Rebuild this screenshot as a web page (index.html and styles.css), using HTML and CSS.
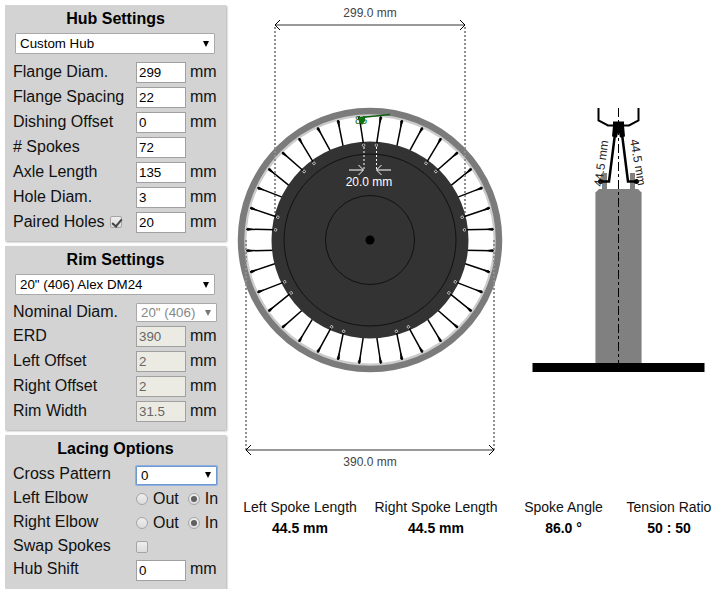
FILE: index.html
```html
<!DOCTYPE html>
<html lang="en">
<head>
<meta charset="utf-8">
<title>Spoke Calculator</title>
<link rel="stylesheet" href="styles.css">
</head>
<body>
<form class="sidebar">
  <section class="panel">
    <h2>Hub Settings</h2>
    <span class="select select-wide"><select aria-label="Hub"><option>Custom Hub</option></select></span>
    <div class="row"><label for="fd">Flange Diam.</label><input class="num" id="fd" value="299"><span class="unit">mm</span></div>
    <div class="row"><label for="fs">Flange Spacing</label><input class="num" id="fs" value="22"><span class="unit">mm</span></div>
    <div class="row"><label for="do">Dishing Offset</label><input class="num" id="do" value="0"><span class="unit">mm</span></div>
    <div class="row"><label for="ns"># Spokes</label><input class="num" id="ns" value="72"></div>
    <div class="row"><label for="al">Axle Length</label><input class="num" id="al" value="135"><span class="unit">mm</span></div>
    <div class="row"><label for="hd">Hole Diam.</label><input class="num" id="hd" value="3"><span class="unit">mm</span></div>
    <div class="row"><span class="paired"><label for="ph">Paired Holes</label><input type="checkbox" class="tick" id="ph" checked></span><input class="num" aria-label="Paired hole spacing" value="20"><span class="unit">mm</span></div>
  </section>

  <section class="panel">
    <h2>Rim Settings</h2>
    <span class="select select-wide"><select aria-label="Rim"><option>20" (406) Alex DM24</option></select></span>
    <div class="row row-select"><label for="nd">Nominal Diam.</label><span class="select"><select id="nd" disabled><option>20" (406)</option></select></span></div>
    <div class="row"><label for="erd">ERD</label><input class="num" id="erd" value="390" disabled><span class="unit">mm</span></div>
    <div class="row"><label for="lo">Left Offset</label><input class="num" id="lo" value="2" disabled><span class="unit">mm</span></div>
    <div class="row"><label for="ro">Right Offset</label><input class="num" id="ro" value="2" disabled><span class="unit">mm</span></div>
    <div class="row"><label for="rw">Rim Width</label><input class="num" id="rw" value="31.5" disabled><span class="unit">mm</span></div>
  </section>

  <section class="panel lacing">
    <h2>Lacing Options</h2>
    <div class="row row-select"><label for="cp">Cross Pattern</label><span class="select select-active"><select id="cp"><option>0</option></select></span></div>
    <div class="row" role="group" aria-label="Left Elbow"><span class="name">Left Elbow</span><span class="choices"><label><input type="radio" name="left"> Out</label><label><input type="radio" name="left" checked> In</label></span></div>
    <div class="row" role="group" aria-label="Right Elbow"><span class="name">Right Elbow</span><span class="choices"><label><input type="radio" name="right"> Out</label><label><input type="radio" name="right" checked> In</label></span></div>
    <div class="row"><label for="ss">Swap Spokes</label><input type="checkbox" class="tick" id="ss"></div>
    <div class="row"><label for="hs">Hub Shift</label><input class="num" id="hs" value="0"><span class="unit">mm</span></div>
  </section>
</form>

<main class="view">
  <svg class="drawing" viewBox="232 5 487 490" role="img" aria-label="Wheel drawing">
    <defs>
      <g id="pair">
        <path class="spoke" d="M-6.4-94.8L-10.8-123.5M6.4-94.8L10.8-123.5"/>
        <path class="nipple" d="M-9.8-117L-9.6-122.5L-10.8-123.5L-12-122.2zM9.800-117L9.600-122.500L10.800-123.500L12-122.200z"/>
      </g>
      <g id="front">
        <use href="#pair"/>
        <circle class="hole" cx="-6.4" cy="-94.8" r="1.3"/>
        <circle class="hole" cx="6.4" cy="-94.8" r="1.3"/>
      </g>
    </defs>

    <!-- Front view of the wheel -->
    <g transform="translate(370 240)">
      <circle class="rim-inner" r="125"/>
      <circle class="rim" r="129"/>
      <use href="#pair" transform="rotate(20)"/>
      <use href="#pair" transform="rotate(60)"/>
      <use href="#pair" transform="rotate(100)"/>
      <use href="#pair" transform="rotate(140)"/>
      <use href="#pair" transform="rotate(180)"/>
      <use href="#pair" transform="rotate(220)"/>
      <use href="#pair" transform="rotate(260)"/>
      <use href="#pair" transform="rotate(300)"/>
      <use href="#pair" transform="rotate(340)"/>
      <path class="dotted" d="M-95-213V0M95-213V0"/>
      <circle class="hub" r="98.500"/>
      <circle class="hub-line" r="86"/>
      <circle class="hub-line" r="44.500"/>
      <circle r="4.500"/>
      <use href="#front"/>
      <use href="#front" transform="rotate(40)"/>
      <use href="#front" transform="rotate(80)"/>
      <use href="#front" transform="rotate(120)"/>
      <use href="#front" transform="rotate(160)"/>
      <use href="#front" transform="rotate(200)"/>
      <use href="#front" transform="rotate(240)"/>
      <use href="#front" transform="rotate(280)"/>
      <use href="#front" transform="rotate(320)"/>
      <path class="dotted" d="M-124 0V210M124 0V210"/>
    </g>

    <!-- Spoke angle marker -->
    <path class="angle" d="M361 117.500L390 114.500"/>
    <path class="angle-tip" d="M359 117h6v4l-3 4l-3-3z"/>
    <text class="angle-text" x="355" y="124">86</text>

    <!-- Dimensions -->
    <path class="dim" d="M276 25H464M247 450H493"/>
    <path class="head" d="M280 20l-5 5l5 5M460 20l5 5l-5 5M251 445l-5 5l5 5M489 445l5 5l-5 5"/>
    <text class="dim-text" x="370" y="17">299.0 mm</text>
    <text class="dim-text" x="370" y="466">390.0 mm</text>
    <path class="gap-dots" d="M364 147V170M376.500 147V170"/>
    <path class="gap-arrow" d="M349 170H363M391 170H377"/>
    <path class="gap-head" d="M358.500 165l5 5l-5 5M381.500 165l-5 5l5 5"/>
    <text class="gap-text" x="369" y="186">20.0 mm</text>

    <!-- Side view -->
    <path class="flange" d="M602 173h5v17h-5zM630 173h5v17h-5z"/>
    <path class="body" d="M596 363V192l3-3h39l3 3V363z"/>
    <path class="body-edge" d="M595.500 192V363M641.500 192V363"/>
    <path class="section" d="M598.500 108V120.500L608 125.500H629L638.500 120.500V108"/>
    <path d="M613 121.500h11v4l1 11-5 1-1.500-7-1.500 7-5-1 1-11z"/>
    <path class="side-spoke" d="M615 134L609 181.500H600M622 134L628 181.500H637"/>
    <circle cx="600.500" cy="181.500" r="2.500"/>
    <circle cx="636.500" cy="181.500" r="2.500"/>
    <text class="side-text" transform="translate(602 187) rotate(-82)">44.5 mm</text>
    <text class="side-text" transform="translate(630 140) rotate(80)">44.5 mm</text>
    <path class="centre" d="M618.500 108V363"/>
    <rect x="532.500" y="363" width="172" height="9"/>
  </svg>

  <dl class="results">
    <div><dt>Left Spoke Length</dt><dd>44.5 mm</dd></div>
    <div><dt>Right Spoke Length</dt><dd>44.5 mm</dd></div>
    <div><dt>Spoke Angle</dt><dd>86.0 °</dd></div>
    <div><dt>Tension Ratio</dt><dd>50 : 50</dd></div>
  </dl>
</main>
</body>
</html>
```
FILE: styles.css
```css
* { box-sizing: border-box; }

body {
  margin: 5px;
  display: flex;
  align-items: flex-start;
  gap: 6px;
  background: #fff;
  color: #111;
  font: 16px/20px "Liberation Sans", Arial, sans-serif;
}

/* Sidebar */
.sidebar {
  flex: none;
  width: 221px;
  display: flex;
  flex-direction: column;
  gap: 5px;
}

.panel {
  display: flex;
  flex-direction: column;
  gap: 4px;
  padding: 0 8px 8px;
  background: #d3d3d3;
  box-shadow: 1px 1px 2px #aaa;
}

.panel h2 {
  margin: 0 0 -4px;
  padding: 4px 0;
  font-size: 16px;
  line-height: 20px;
  text-align: center;
  color: #000;
}

.row {
  display: grid;
  grid-template-columns: 123px 50px auto;
  grid-template-rows: 100%;
  align-items: center;
  height: 21px;
  white-space: nowrap;
}

.row-select {
  grid-template-columns: 123px 81px;
  height: 19px;
}

.row > label, .name, .unit, .paired { padding-bottom: 2px; }
.unit { padding-left: 4px; }

.lacing { gap: 0; }
.lacing h2 { margin-bottom: 0; }
.lacing .row { height: 24px; }
.lacing .row:last-child { height: 22px; }

input, select {
  margin: 0;
  font-family: "Liberation Sans", Arial, sans-serif;
  color: #000;
}

.num {
  width: 50px;
  height: 21px;
  padding: 1px 2px;
  border: 1px solid #a0a0a0;
  background: #fff;
}

.num:disabled {
  background: #ebebe4;
  color: #666;
}

.select {
  position: relative;
  display: block;
  height: 19px;
}

.select-wide {
  height: 21px;
  margin: 0 3px 4px 2px;
}

.select::after {
  content: "";
  position: absolute;
  right: 6px;
  top: 50%;
  margin-top: -3px;
  border: 3px solid transparent;
  border-top: 6px solid #000;
  border-bottom: 0;
  pointer-events: none;
}

.select:has(:disabled)::after { border-top-color: #777; }

.select select {
  appearance: none;
  display: block;
  width: 100%;
  height: 100%;
  padding: 0 16px 0 4px;
  border: 1px solid #a9a9a9;
  border-radius: 1px;
  background: #fff;
}

.select select:disabled {
  color: #888;
  opacity: 1;
}

.select-active select {
  border-color: #6f97d2;
  box-shadow: 0 0 0 1px #8fb0e0;
}

.paired {
  display: flex;
  align-items: center;
  gap: 5px;
}

.tick, [type="radio"] {
  appearance: none;
  width: 12px;
  height: 12px;
  border: 1px solid #a5a5a5;
  border-radius: 2px;
  background: linear-gradient(#eee, #dcdcdc);
}

.tick:checked::before {
  content: "";
  display: block;
  width: 4px;
  height: 8px;
  margin: 0 0 0 3px;
  border: solid #444;
  border-width: 0 2px 2px 0;
  transform: rotate(40deg);
}

[type="radio"] {
  border-radius: 50%;
  display: grid;
  place-items: center;
}

[type="radio"]:checked::before {
  content: "";
  width: 6px;
  height: 6px;
  border-radius: 50%;
  background: #606060;
}

.choices {
  display: flex;
  gap: 9px;
}

.choices label {
  display: flex;
  align-items: center;
  gap: 5px;
}

/* Drawing */
.view {
  flex: 1;
  min-width: 0;
}

.drawing {
  display: block;
  width: 100%;
  height: auto;
}

.rim, .rim-inner, .hub-line, .spoke, .hole, .dotted, .dim, .head,
.angle, .gap-dots, .gap-arrow, .gap-head, .section, .side-spoke, .centre, .body-edge {
  fill: none;
  stroke: #000;
}

.rim { stroke: #7b7b7b; stroke-width: 6.5px; }
.rim-inner { stroke: #ccc; stroke-width: 3px; }
.hub { fill: #333; }
.hub-line { stroke: #111; }
.spoke { stroke-width: 1.5px; }
.nipple { stroke: #000; stroke-width: 0.6px; }
.hole { stroke: #ddd; stroke-width: 0.8px; fill: #222; }
.dotted { stroke: #909090; stroke-width: 2px; stroke-dasharray: 2 2; }
.dim { stroke: #999; stroke-width: 2px; }
.angle { stroke: #106010; stroke-width: 1.5px; }
.angle-tip { fill: #107010; }
.angle-text { fill: #107010; font-size: 11px; }
.dim-text { fill: #444; font-size: 12px; text-anchor: middle; }
.gap-dots { stroke: #fff; stroke-dasharray: 2 2; }
.gap-arrow { stroke: #999; stroke-width: 2px; }
.gap-head { stroke: #fff; }
.gap-text { fill: #fff; font-size: 12px; text-anchor: middle; }
.flange, .body { fill: #808080; }
.body-edge { stroke: #b5b5b5; }
.section { stroke-width: 2px; }
.side-spoke { stroke-width: 2.5px; }
.side-text { fill: #222; font-size: 12px; }
.centre { stroke-dasharray: 9 3 3 3; }

/* Results */
.results {
  display: grid;
  grid-template-columns: 136fr 136fr 119fr 92fr;
  margin: 0;
  padding: 2px 4px 0 0;
  font-size: 14px;
  line-height: 21px;
  text-align: center;
  white-space: nowrap;
}

.results dd {
  margin: 0;
  font-weight: bold;
  color: #000;
}
```
